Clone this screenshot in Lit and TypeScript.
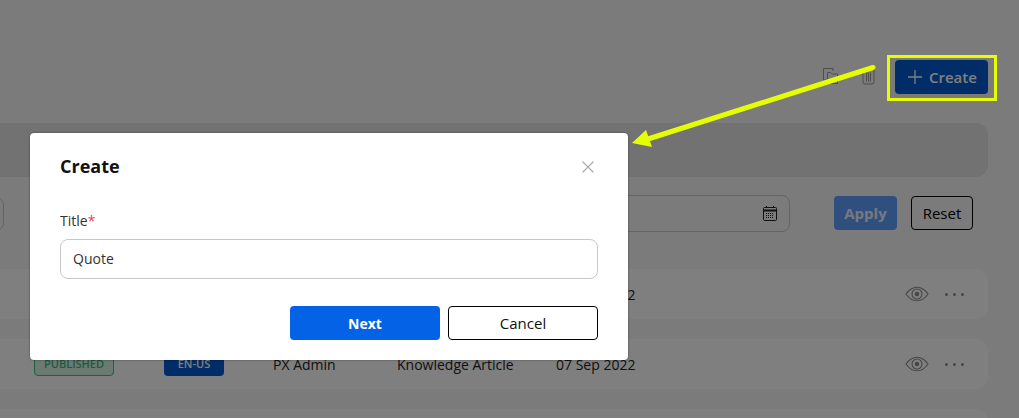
import { LitElement, html, css, svg } from "lit";
import { customElement } from "lit/decorators.js";

const eye = svg`<svg class="eye" width="24" height="16" viewBox="0 0 24 16" fill="none" stroke="currentColor" stroke-width="1.1"><path d="M1 8C4 3.6 7.8 1.2 12 1.2S20 3.6 23 8c-3 4.4-6.800 6.800-11 6.800S4 12.400 1 8Z"/><circle cx="12" cy="8" r="5"/><circle cx="12" cy="8" r="2.200" fill="currentColor" stroke="none"/></svg>`;

@customElement("app-root")
export class AppRoot extends LitElement {
  static styles = css`
    :host {
      display: block;
      position: relative;
      width: 1019px;
      height: 418px;
      overflow: hidden;
      font-family: "Open Sans", "Noto Sans", sans-serif;
      font-size: 14px;
      color: #111;
      background: #f6f6f6;
    }
    .page { display: flex; flex-direction: column; height: 418px; }
    .top {
      height: 123px;
      flex: none;
      box-sizing: border-box;
      display: flex;
      justify-content: flex-end;
      align-items: flex-start;
      padding: 60px 31px 0 0;
    }
    .top .ico { color: #9a9a9a; margin-top: 8px; }
    .copy { margin-right: 24px; }
    .trash { margin-right: 20px; }
    .create {
      width: 93px;
      height: 34px;
      box-sizing: border-box;
      display: flex;
      align-items: center;
      gap: 7px;
      padding-left: 13px;
      border-radius: 4px;
      background: #0159cf;
      color: #fff;
      font-weight: 600;
      font-size: 15px;
    }
    .band {
      height: 54px;
      flex: none;
      margin: 0 31px 0 -20px;
      border-radius: 0 12px 12px 0;
      background: #e4e4e4;
    }
    .filters {
      height: 92px;
      flex: none;
      box-sizing: border-box;
      padding: 18px 46px 0 0;
      display: flex;
      align-items: flex-start;
    }
    .field {
      box-sizing: border-box;
      border: 1px solid #c8c8c8;
      border-radius: 8px;
    }
    .field.left { width: 104px; height: 34px; margin: 2px 0 0 -100px; }
    .field.date {
      width: 190px;
      height: 37px;
      margin-left: auto;
      display: flex;
      align-items: center;
      justify-content: flex-end;
      padding-right: 12px;
      color: #222;
    }
    .apply, .reset {
      height: 34px;
      box-sizing: border-box;
      display: flex;
      align-items: center;
      justify-content: center;
      border-radius: 4px;
      margin-top: 1px;
    }
    .apply {
      width: 63px;
      margin-left: 44px;
      background: #5e9fff;
      color: #ecf3ff;
      font-weight: 700;
      font-size: 15px;
    }
    .reset {
      width: 62px;
      margin-left: 14px;
      border: 1px solid #000;
      color: #000;
      font-size: 15px;
    }
    .rows { display: flex; flex-direction: column; gap: 20px; }
    .row {
      height: 50px;
      flex: none;
      margin: 0 31px 0 -20px;
      padding-left: 54px;
      border-radius: 0 12px 12px 0;
      background: #fff;
      display: grid;
      grid-template-columns: 130px 109px 124px 159px 1fr auto;
      align-items: center;
    }
    .badge {
      height: 26px;
      margin-bottom: 2px;
      box-sizing: border-box;
      display: flex;
      align-items: center;
      justify-content: center;
      border-radius: 4px;
      font-size: 11px;
      font-weight: 600;
      text-transform: uppercase;
    }
    .pub {
      width: 80px;
      border: 1px solid #3cc089;
      background: #d6f4e6;
      color: #3cb482;
    }
    .lang { width: 60px; background: #0159cf; color: #fff; }
    .cell { color: #222; }
    .actions {
      display: flex;
      align-items: center;
      gap: 16px;
      padding-right: 24px;
      color: #8c8c8c;
    }
    .dots { display: flex; gap: 5px; }
    .dots i { width: 3px; height: 3px; border-radius: 50%; background: currentColor; }
    .scrim { position: absolute; inset: 0; background: rgba(0, 0, 0, 0.5); }
    .modal {
      position: absolute;
      left: 30px;
      top: 133px;
      width: 598px;
      height: 227px;
      box-sizing: border-box;
      padding: 20px 30px 20px;
      border-radius: 4px;
      background: #fff;
      box-shadow: 0 0 2px rgba(0, 0, 0, 0.5);
      display: flex;
      flex-direction: column;
    }
    .head {
      display: flex;
      align-items: center;
      justify-content: space-between;
      height: 27px;
    }
    .head h2 { margin: 0; font-size: 18px; font-weight: 700; color: #111; line-height: 27px; }
    .close { margin-right: 3px; color: #aaa; display: block; }
    label { margin-top: 31px; line-height: 20px; font-size: 14px; color: #333; }
    label span { color: #e0485a; }
    .input {
      margin-top: 8px;
      height: 40px;
      box-sizing: border-box;
      border: 1px solid #c9c9c9;
      border-radius: 8px;
      display: flex;
      align-items: center;
      padding: 0 0 2px 12px;
      font-size: 14px;
      color: #333;
    }
    .foot { margin-top: 27px; display: flex; justify-content: flex-end; gap: 8px; }
    .btn {
      width: 150px;
      height: 34px;
      box-sizing: border-box;
      border-radius: 4px;
      display: flex;
      align-items: center;
      justify-content: center;
      font-size: 15px;
    }
    .next { background: #0362e6; color: #fff; font-weight: 700; font-size: 14px; }
    .cancel { border: 1px solid #000; color: #111; }
    .marks { position: absolute; inset: 0; pointer-events: none; }
  `;

  private row() {
    return html`<div class="row">
      <div class="badge pub">Published</div>
      <div class="badge lang">EN-US</div>
      <div class="cell">PX Admin</div>
      <div class="cell">Knowledge Article</div>
      <div class="cell">07 Sep 2022</div>
      <div class="actions">${eye}<div class="dots"><i></i><i></i><i></i></div></div>
    </div>`;
  }

  render() {
    return html`
      <div class="page">
        <div class="top">
          <svg class="ico copy" width="15" height="16" viewBox="0 0 15 16" fill="none" stroke="currentColor" stroke-width="1"><path d="M10 3V.5H.5V12H4"/><path d="M4.500 4.500h3l1.500 1.500h5.500v9.500h-10z"/></svg>
          <svg class="ico trash" width="13" height="17" viewBox="0 0 13 17" fill="none" stroke="currentColor" stroke-width="1"><path d="M.5 1.500h12M1 1.500v12.500a2 2 0 0 0 2 2h7a2 2 0 0 0 2-2v-12.500M4.500 4.500v9M6.500 4.500v9M8.500 4.500v9"/></svg>
          <div class="create">
            <svg width="14" height="14" viewBox="0 0 14 14" stroke="currentColor" stroke-width="1.300"><path d="M7 0v14M0 7h14"/></svg>
            <span>Create</span>
          </div>
        </div>
        <div class="band"></div>
        <div class="filters">
          <div class="field left"></div>
          <div class="field date">
            <svg width="14" height="15" viewBox="0 0 14 15" fill="none" stroke="currentColor" stroke-width="1"><rect x=".5" y="1.500" width="13" height="13" rx="1"/><path d="M.5 4.500h13" stroke-width="2"/><path d="M3.500 0v2M10.500 0v2"/><path d="M3 7.500h8M3 9.500h8M3 11.500h8" stroke-dasharray="1 1"/></svg>
          </div>
          <div class="apply">Apply</div>
          <div class="reset">Reset</div>
        </div>
        <div class="rows">${this.row()}${this.row()}<div class="row"></div></div>
      </div>
      <div class="scrim"></div>
      <div class="modal">
        <div class="head">
          <h2>Create</h2>
          <svg class="close" width="14" height="14" viewBox="0 0 14 14" fill="none" stroke="currentColor" stroke-width="1.100"><path d="M1.500 1.500l11 11M12.500 1.500l-11 11"/></svg>
        </div>
        <label>Title<span>*</span></label>
        <div class="input">Quote</div>
        <div class="foot">
          <div class="btn next">Next</div>
          <div class="btn cancel">Cancel</div>
        </div>
      </div>
      <svg class="marks" width="1019" height="418" viewBox="0 0 1019 418">
        <rect x="888.500" y="56.500" width="107" height="43" fill="none" stroke="#e6ff00" stroke-width="3"/>
        <path d="M873 67.500L648 139" stroke="#e6ff00" stroke-width="5" stroke-linecap="round"/>
        <path d="M632 143L646 130L652 147Z" fill="#e6ff00"/>
      </svg>
    `;
  }
}
